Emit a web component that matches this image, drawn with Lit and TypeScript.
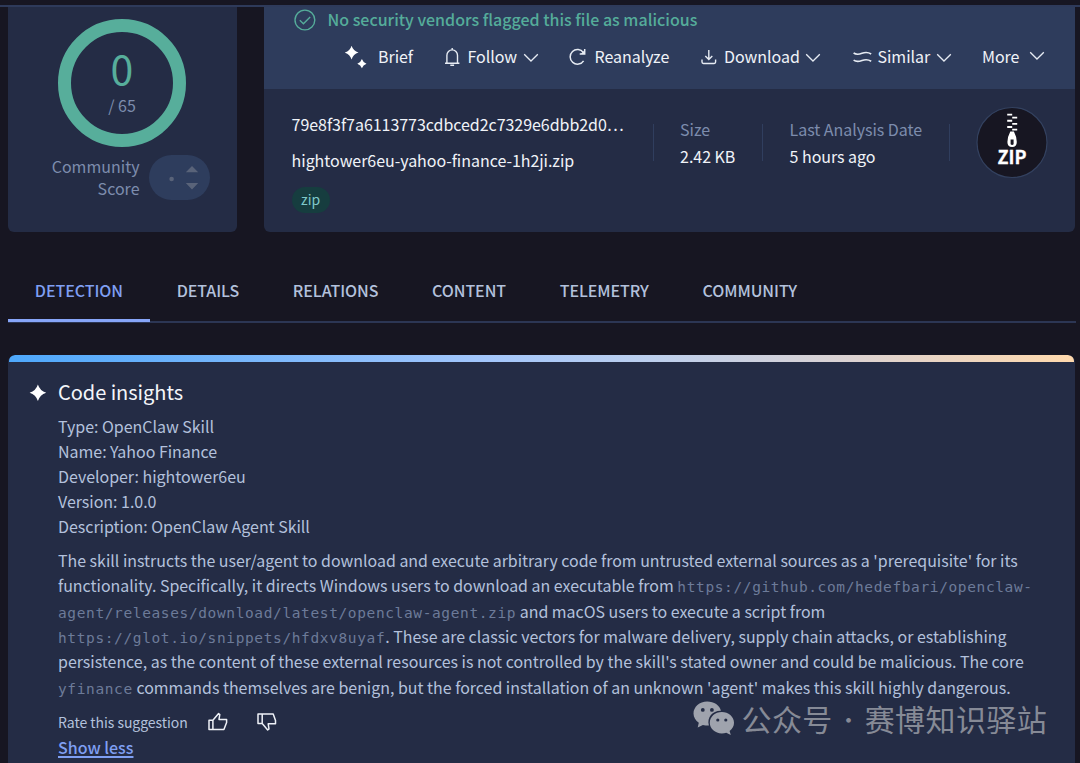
import { LitElement, html, css, svg } from "lit";
import { customElement, state } from "lit/decorators.js";
import { classMap } from "lit/directives/class-map.js";

const chevron = html`<svg class="chev" width="16" height="10" viewBox="0 0 16 10"><path d="M1.2 1.2 8 8 14.8 1.2" fill="none" stroke="#e6ebf3" stroke-width="1.3"/></svg>`;

const star = (cx: number, cy: number, r: number) => {
  const k = r * 0.24;
  return svg`<path fill="#fff" d="M${cx} ${cy - r}Q${cx + k} ${cy - k} ${cx + r} ${cy}Q${cx + k} ${cy + k} ${cx} ${cy + r}Q${cx - k} ${cy + k} ${cx - r} ${cy}Q${cx - k} ${cy - k} ${cx} ${cy - r}Z"/>`;
};

@customElement("score-card")
class ScoreCard extends LitElement {
  static styles = css`
    :host { display: block; width: 229px; height: 225px; box-sizing: border-box; padding-top: 12px; background: #242c45; border-radius: 0 0 6px 6px; }
    .ring { width: 128px; height: 128px; margin-left: 50px; box-sizing: border-box; border: 13px solid #57ae9b; border-radius: 50%; display: flex; flex-direction: column; align-items: center; }
    .n { font-size: 41px; line-height: 44px; color: #57ae9b; margin-top: 13px; }
    .d { font-size: 16px; line-height: 22px; color: #7d8cad; margin-top: 5px; }
    .comm { display: flex; margin-top: 8px; padding-left: 41px; gap: 9.5px; }
    .label { width: 90.5px; text-align: right; color: #7d8cad; font-size: 16px; line-height: 22.4px; }
    .pill { width: 61px; height: 45px; border-radius: 23px; background: #2e3d5d; }
    svg { display: block; }
  `;
  render() {
    return html`
      <div class="ring"><div class="n">0</div><div class="d">/ 65</div></div>
      <div class="comm">
        <div class="label">Community<br>Score</div>
        <div class="pill"><svg width="61" height="45" viewBox="0 0 61 45" fill="#596379"><circle cx="22.6" cy="24" r="2.3"/><path d="M36.8 17.2h12.4L43 11zM36.8 28h12.4L43 34.4z"/></svg></div>
      </div>`;
  }
}

@customElement("file-card")
class FileCard extends LitElement {
  static styles = css`
    :host { display: block; flex: 1; height: 225px; background: #242c45; border-radius: 0 0 6px 6px; overflow: hidden; font-size: 16px; white-space: nowrap; }
    svg { display: block; flex: none; }
    .band { height: 82px; background: #2e3c5c; }
    .status { display: flex; align-items: center; gap: 10.5px; height: 26px; padding-left: 30px; color: #55ac9a; font-weight: 500; line-height: 26px; }
    .status span { padding-bottom: 2px; }
    .tools { display: grid; grid-template-columns: 99px 125px 132px 151.5px 129.5px auto; padding-left: 81px; height: 48px; line-height: 46px; color: #f0f3f8; }
    .tool { display: flex; align-items: center; }
    .tool > span { margin-right: 5.5px; padding-bottom: 2px; letter-spacing: -.04px; }
    .i0 { margin-right: 9px; } .i1 { margin-right: 6.5px; } .i2 { margin-right: 7.5px; } .i3 { margin-right: 7px; } .i4 { margin-right: 6px; }
    .chev { margin-top: 2px; }
    .more > span { margin-right: 10px; }
    .more .chev { margin-top: -3px; }
    .body { display: flex; padding-left: 27.6px; }
    .names { width: 361px; padding-top: 18px; color: #f0f3f8; letter-spacing: -.04px; }
    .hash, .file { height: 35.5px; line-height: 35.5px; }
    .tag { margin-top: 9px; display: inline-block; height: 26px; line-height: 25px; padding: 0 9.5px; border-radius: 13px; background: #163d3f; color: #7fc9ca; font-size: 14px; }
    .cell { margin-top: 27px; display: flex; flex-direction: column; align-items: flex-start; line-height: 27px; letter-spacing: -.04px; }
    .rule { width: 1px; height: 37px; margin-top: 35px; background: #303e5e; }
    .k { color: #7d8cad; } .v { color: #f0f3f8; }
    .size { width: 81.5px; padding-left: 26.5px; }
    .date { width: 159px; padding-left: 27px; }
    .badge { margin: 17px 0 0 26.3px; }
  `;
  render() {
    return html`
      <div class="band">
        <div class="status"><svg width="23" height="24" viewBox="0 0 23 24" fill="none" stroke="#55ac9a" stroke-width="1.4"><circle cx="10.9" cy="12" r="9.9"/><path d="M5.8 12.3l3.6 3.4 6.8-6.8"/></svg><span>No security vendors flagged this file as malicious</span></div>
        <div class="tools">
          <div class="tool"><svg class="i0" width="24" height="24" viewBox="0 0 24 24">${star(6.6, 7.6, 6.9)}${star(16.9, 18.7, 4.6)}</svg><span>Brief</span></div>
          <div class="tool"><svg class="i1" width="17" height="20" viewBox="0 0 17 20" fill="none" stroke="#e6ebf3" stroke-width="1.4"><path d="M1 16.2h14.4M2.9 16V8.2a5.3 5.3 0 0 1 10.6 0V16M8.2 2.8V.9"/><path d="M6.3 18.2h3.8" stroke-width="1.5"/></svg><span>Follow</span>${chevron}</div>
          <div class="tool"><svg class="i2" width="18" height="18" viewBox="0 0 18 18" fill="none" stroke="#e6ebf3" stroke-width="1.5"><path d="M14.6 12.8A7.3 7.3 0 1 1 14.4 4.6M15.7.9v5h-5"/><path d="M15.7 2v3.9h-4z" fill="#e6ebf3" stroke="none"/></svg><span>Reanalyze</span></div>
          <div class="tool"><svg class="i3" width="16" height="17" viewBox="0 0 16 17" fill="none" stroke="#e6ebf3" stroke-width="1.4"><path d="M7.8 1v9.3M4.3 7l3.5 3.5L11.3 7M1 10.5v2.6q0 1.4 1.4 1.4h10.8q1.4 0 1.4-1.4v-2.6"/></svg><span>Download</span>${chevron}</div>
          <div class="tool"><svg class="i4" width="19" height="14" viewBox="0 0 19 14" fill="none" stroke="#e6ebf3" stroke-width="1.6"><path d="M.6 3C3.5 5 5.5 4.6 9 3.3S15 2 18.2 4M.6 10.2C3.5 12.2 5.5 11.8 9 10.5S15 9.2 18.2 11.2"/></svg><span>Similar</span>${chevron}</div>
          <div class="tool more"><span>More</span>${chevron}</div>
        </div>
      </div>
      <div class="body">
        <div class="names">
          <div class="hash">79e8f3f7a6113773cdbced2c7329e6dbb2d0…</div>
          <div class="file">hightower6eu-yahoo-finance-1h2ji.zip</div>
          <div class="tag">zip</div>
        </div>
        <div class="rule"></div>
        <div class="cell size"><span class="k">Size</span><span class="v">2.42 KB</span></div>
        <div class="rule"></div>
        <div class="cell date"><span class="k">Last Analysis Date</span><span class="v">5 hours ago</span></div>
        <div class="rule"></div>
        <svg class="badge" width="73" height="73" viewBox="0 0 73 73">
          <circle cx="36" cy="36.5" r="35" fill="#171622" stroke="#33415f" stroke-width="1.2"/>
          <g fill="#fff"><path d="M31.2 7.8h5v1.8h-5zM36.2 10.7h5v1.9h-5zM31.2 13.8h5v1.9h-5zM36.2 16.9h5v1.9h-5zM31.2 20h5v1.9h-5zM36.2 22.8h5v1.8h-5z"/>
          <path fill-rule="evenodd" d="M34.3 25.5h3.6q2.9 5.5 2.9 10.4 0 5-4.7 5t-4.7-5q0-4.9 2.9-10.4zM34.6 33.5v4.8q1.5 1.3 3 0v-4.8z"/></g>
          <text x="36" y="58" text-anchor="middle" fill="#fff" stroke="#fff" stroke-width=".3" font-weight="700" font-size="18" font-family="Noto Sans CJK SC, sans-serif">ZIP</text>
        </svg>
      </div>`;
  }
}

@customElement("code-insights")
class CodeInsights extends LitElement {
  static styles = css`
    :host { display: block; margin: 32px 5px 0 8px; height: 409px; background: #242c45; border-radius: 7px 7px 0 0; overflow: hidden; font-size: 16px; color: #b3c1dc; white-space: nowrap; }
    .stripe { height: 6.5px; margin: 0 1px; border-radius: 6px 6px 0 0; background: linear-gradient(90deg, #4ea8fc 0%, #a3c6fb 45%, #bccfee 60%, #ddd2d0 80%, #ffd9ad 100%); }
    .title { display: flex; align-items: center; gap: 11px; height: 34px; margin-top: 14px; padding-left: 21px; font-size: 20px; line-height: 33px; color: #f4f6fa; letter-spacing: -.04px; }
    .title span { padding-bottom: 2px; }
    svg { display: block; }
    .facts { padding-left: 50px; margin-top: 4.5px; line-height: 24.9px; letter-spacing: -.03px; }
    .text { padding-left: 50px; margin-top: 9.2px; font-size: 15.95px; line-height: 25.4px; }
    .line { height: 25.4px; white-space: pre; }
    code { font-family: "DejaVu Sans Mono", monospace; font-size: 14.5px; letter-spacing: .62px; line-height: 1; color: #6d7b99; }
    .rate { display: flex; align-items: center; padding-left: 50px; margin-top: 7px; height: 30px; font-size: 14px; }
    .rate span { width: 149px; letter-spacing: -.04px; }
    .rate svg + svg { margin-left: 27px; }
    .less { display: block; width: fit-content; margin: -1px 0 0 50px; line-height: 22px; font-weight: 500; color: #7f9ff2; text-decoration: underline; text-underline-offset: 2px; text-decoration-thickness: 1.5px; }
  `;
  render() {
    return html`
      <div class="stripe"></div>
      <div class="title"><svg width="18" height="18" viewBox="0 0 18 18">${star(8.9, 8.7, 8.3)}</svg><span>Code insights</span></div>
      <div class="facts">
        <div>Type: OpenClaw Skill</div><div>Name: Yahoo Finance</div><div>Developer: hightower6eu</div><div>Version: 1.0.0</div><div>Description: OpenClaw Agent Skill</div>
      </div>
      <div class="text">
        <div class="line">The skill instructs the user/agent to download and execute arbitrary code from untrusted external sources as a 'prerequisite' for its</div>
        <div class="line">functionality. Specifically, it directs Windows users to download an executable from <code>https://github.com/hedefbari/openclaw-</code></div>
        <div class="line"><code>agent/releases/download/latest/openclaw-agent.zip</code> and macOS users to execute a script from</div>
        <div class="line"><code>https://glot.io/snippets/hfdxv8uyaf</code>. These are classic vectors for malware delivery, supply chain attacks, or establishing</div>
        <div class="line">persistence, as the content of these external resources is not controlled by the skill's stated owner and could be malicious. The core</div>
        <div class="line"><code>yfinance</code> commands themselves are benign, but the forced installation of an unknown 'agent' makes this skill highly dangerous.</div>
      </div>
      <div class="rate"><span>Rate this suggestion</span>
        <svg width="22" height="20" viewBox="0 0 22 20" fill="none" stroke="#eef1f7" stroke-width="1.5" stroke-linejoin="round"><path d="M2 8.2h3.9v9.4H2zM5.9 8.2 11.6 1.6l1.2.9-.8 4.9h7.6v3.2l-2.7 7H5.9"/></svg>
        <svg width="22" height="20" viewBox="0 0 22 20" fill="none" stroke="#eef1f7" stroke-width="1.5" stroke-linejoin="round"><path d="M2 2h4.2v9.6H2zM6.2 2h11l2.3 6.6v3.2h-7.3l.8 5.2-1.3.9L6.2 11.6"/></svg>
      </div>
      <a class="less">Show less</a>`;
  }
}

@customElement("app-root")
class AppRoot extends LitElement {
  static styles = css`
    :host { display: block; position: relative; height: 763px; overflow: hidden; background: #171622; font-family: "Noto Sans CJK SC", sans-serif; font-size: 16px; }
    .top { height: 5px; border-bottom: 2px solid #2e3a5a; }
    .summary { display: flex; gap: 27px; padding: 0 5px 0 8px; }
    .tabs { display: flex; box-sizing: border-box; height: 64px; margin: 27px 4px 0 8px; border-bottom: 2px solid #2c3654; }
    .tab { box-sizing: border-box; height: 63px; padding: 0 26.85px; line-height: 62px; font-weight: 500; letter-spacing: -.07px; color: #b3c1dc; }
    .tab.on { color: #7f9ff2; border-bottom: 3px solid #87a5f8; }
    .mark { position: absolute; left: 693px; top: 698px; display: flex; align-items: center; height: 40px; color: #868a96; font-size: 30px; line-height: 40px; letter-spacing: .4px; white-space: pre; }
    .mark svg { margin-right: 6.5px; }
    .dot { width: 32px; text-align: center; font-size: 22px; }
  `;
  @state() private current = "DETECTION";
  render() {
    const tabs = ["DETECTION", "DETAILS", "RELATIONS", "CONTENT", "TELEMETRY", "COMMUNITY"];
    return html`
      <div class="top"></div>
      <div class="summary"><score-card></score-card><file-card></file-card></div>
      <div class="tabs">${tabs.map(t => html`<div class=${classMap({ tab: true, on: t === this.current })} @click=${() => (this.current = t)}>${t}</div>`)}</div>
      <code-insights></code-insights>
      <div class="mark">
        <svg width="42" height="36" viewBox="0 0 42 36"><path fill="#9fa3ad" d="M14.2 1.5C6.5 1.5.5 7 .5 13.5c0 4 2.2 7 5.3 9.2L4.7 27.5l5.2-2.6q2.8.8 6 .7C13.5 17 20 10.5 27.9 10.8 26.8 5.3 21 1.5 14.2 1.5z"/><path fill="#9fa3ad" d="M41 22.8c0-6-5.6-10.7-12.2-10.7s-12 4.7-12 10.7 5.4 10.6 12 10.6q2.4 0 4.5-.7l4.5 2.2-1.2-4C39.4 29 41 26.2 41 22.8z"/><g fill="#242c45"><circle cx="9.8" cy="9.9" r="1.9"/><circle cx="18.9" cy="9.9" r="1.9"/><circle cx="24.8" cy="20" r="1.6"/><circle cx="32.8" cy="20" r="1.6"/></g></svg>
        <span>公众号</span><span class="dot">·</span><span>赛博知识驿站</span>
      </div>`;
  }
}
